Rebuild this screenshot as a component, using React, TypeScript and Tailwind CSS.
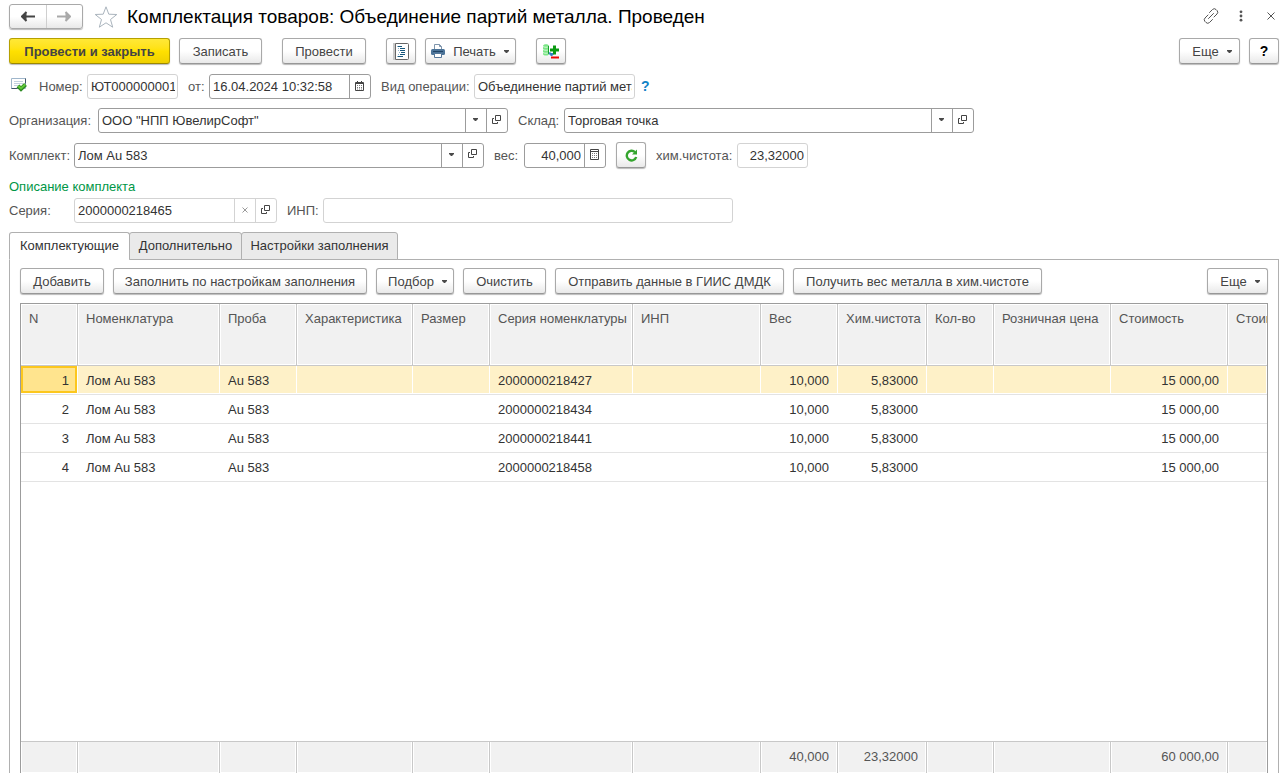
import React from "react";
import clsx from "clsx";

interface ButtonProps {
  className?: string;
  label?: string;
  caret?: boolean;
  primary?: boolean;
  children?: React.ReactNode;
}

const Caret = () => (
  <svg width="6" height="3" viewBox="0 0 6 3" className="shrink-0" fill="#4a4a4a">
    <path d="M0 0h5v1L3 3H2L0 1z" />
  </svg>
);

const Button: React.FC<ButtonProps> = ({ className, label, caret, primary, children }) => (
  <button
    type="button"
    aria-label={label}
    className={clsx(
      "flex h-[26px] shrink-0 items-center justify-center gap-2 rounded-[3px] border bg-linear-to-b whitespace-nowrap text-[#444] shadow-[0_1px_1px_#bbb]",
      primary
        ? "border-[#b5a000] border-b-[#9c8800] from-[#ffe836] via-[#ffe100] to-[#efd000] font-bold"
        : "border-[#a9a9a9] border-b-[#979797] from-white from-50% to-[#e9e9e9]",
      className
    )}
  >
    {children}
    {caret && <Caret />}
  </button>
);

interface FieldProps {
  id: string;
  label: string;
  value: string;
  labelWidth: string;
  width: string;
  muted?: boolean;
  right?: boolean;
  actions?: { label: string; icon: React.ReactNode }[];
}

const Field: React.FC<FieldProps> = ({ id, label, value, labelWidth, width, muted, right, actions = [] }) => {
  const border = muted ? "border-[#d3d3d3]" : "border-[#9c9c9c]";
  return (
    <div className="flex items-center">
      <label htmlFor={id} className={clsx("shrink-0 whitespace-nowrap text-[#555]", labelWidth)}>
        {label}
      </label>
      <div className={clsx("flex h-[25px] rounded-[3px] border bg-white", border, width)}>
        <input
          id={id}
          defaultValue={value}
          className={clsx("min-w-0 flex-1 bg-transparent pl-[3px] text-[#333] outline-none", right ? "pr-[3px] text-right" : "pr-[2px]")}
        />
        {actions.map((action) => (
          <button
            key={action.label}
            type="button"
            aria-label={action.label}
            className={clsx("flex w-[21px] shrink-0 items-center justify-center border-l pb-[2px]", border)}
          >
            {action.icon}
          </button>
        ))}
      </div>
    </div>
  );
};

const OpenIcon = () => (
  <svg width="10" height="10" viewBox="0 0 10 10" fill="none" stroke="#444">
    <path d="M3.500 .5h5v5h-5zM2 3.500H.5v5h5V7" />
  </svg>
);

const CalendarIcon = () => (
  <svg width="10" height="10" viewBox="0 0 10 10" fill="none" stroke="#444">
    <path d="M.5 1.500h8v8h-8zM0 2.500h9M2.500 0v2M6.500 0v2" />
    <path d="M2 4.500h1m1 0h1m1 0h1M2 6.500h1m1 0h1m1 0h1M2 8h1m1 0h1m1 0h1" strokeOpacity=".7" />
  </svg>
);

const CalculatorIcon = () => (
  <svg width="10" height="11" viewBox="0 0 10 11" fill="none" stroke="#444">
    <path d="M.5 .5h8v10h-8zM1 2.500h7" />
    <path d="M2 4.500h1m1 0h1m1 0h1M2 6.500h1m1 0h1m1 0h1M2 8.500h1m1 0h1m1 0h1" strokeOpacity=".7" />
  </svg>
);

const ClearIcon = () => (
  <svg width="6" height="6" viewBox="0 0 6 6" stroke="#999">
    <path d="M.5 .5l5 5M5.500 .5l-5 5" />
  </svg>
);

const Arrow = ({ color, flip }: { color: string; flip?: boolean }) => (
  <svg width="14" height="11" viewBox="0 0 14 11" fill="none" stroke={color} strokeWidth="2" className={clsx(flip && "rotate-180")}>
    <path d="M14 5.500H3" />
    <path d="M5.500 1L1 5.500 5.500 10" />
    <path d="M1.500 5.500l4-3.500v7z" fill={color} stroke="none" />
  </svg>
);

const PostedIcon = () => (
  <svg width="16" height="14" viewBox="0 0 16 14" fill="none">
    <path d="M.5 .5h14v10H.5z" fill="#fff" stroke="#9fb6cb" />
    <path d="M14.500 .5v5M.5 10.500h6" stroke="#3f5468" />
    <path d="M3 3.500h9M3 5.500h9M3 7.500h5" stroke="#c3d2e0" />
    <path d="M7 8l3 3 4.500-4.500" stroke="#2c8a22" strokeWidth="4" />
    <path d="M7.300 8l2.700 2.500 4.200-4" stroke="#62c93a" strokeWidth="2" />
  </svg>
);

const ReportIcon = () => (
  <svg width="16" height="17" viewBox="0 0 16 17" fill="none">
    <path d="M0 0h2v17H0z" fill="#c9c9c9" />
    <path d="M2.500 .5h12a1 1 0 0 1 1 1v14a1 1 0 0 1-1 1h-12z" fill="#fff" stroke="#666" />
    <path d="M5 3.500h4M7 5.500h5M7 7.500h5M8 9.500h4M7 11.500h5M5 13.500h5" stroke="#17577d" />
    <path d="M4 3.500h1M5 5.500h1M5 7.500h1M6 9.500h1M5 11.500h1M4 13.500h1" stroke="#8db4cb" />
  </svg>
);

const PrinterIcon = () => (
  <svg width="14" height="14" viewBox="0 0 14 14" fill="none">
    <path d="M3.500 5V.5h5l2 2V5" fill="#fff" stroke="#7e95ac" />
    <path d="M8.500 .5v2h2" stroke="#7e95ac" />
    <rect y="5" width="14" height="6" rx="1.500" fill="#4c7499" />
    <path d="M2 7.500h10" stroke="#1f4365" />
    <path d="M3.500 9.500h7v4h-7z" fill="#fff" stroke="#56789a" />
  </svg>
);

const StockIcon = () => (
  <svg width="16" height="15" viewBox="0 0 16 15" fill="none">
    <path d="M0 2c0-2.500 6-2.500 6 0v8c0 2-6 2-6 0z" fill="#7be586" />
    <path d="M0 2.500c1 1 5 1 6 0M0 5.500c1 1 5 1 6 0M0 8.500c1 1 5 1 6 0" stroke="#d2f8d4" />
    <path d="M5.500 2v8" stroke="#16a32a" />
    <path d="M7 8v1.500h4L8.500 12 6 9.500" fill="#2f7fc4" stroke="#2f7fc4" />
    <path d="M11.500 1.500v9M7 6h9" stroke="#0a9a12" strokeWidth="3" />
    <path d="M8 13.500h8" stroke="#f00505" strokeWidth="2" />
  </svg>
);

const RefreshIcon = () => (
  <svg width="13" height="13" viewBox="0 0 13 13" fill="none">
    <path d="M10 3.200A4.800 4.800 0 1 0 11.200 8" stroke="#34a52e" strokeWidth="2.400" />
    <path d="M12 .5v5H7z" fill="#34a52e" />
  </svg>
);

const pick = [
  { label: "Выбрать", icon: <Caret /> },
  { label: "Открыть", icon: <OpenIcon /> },
];

const columns = [
  { title: "N", width: "w-[57px]", right: true, total: "" },
  { title: "Номенклатура", width: "w-[142px]", total: "" },
  { title: "Проба", width: "w-[77px]", total: "" },
  { title: "Характеристика", width: "w-[116px]", total: "" },
  { title: "Размер", width: "w-[77px]", total: "" },
  { title: "Серия номенклатуры", width: "w-[143px]", total: "" },
  { title: "ИНП", width: "w-[128px]", total: "" },
  { title: "Вес", width: "w-[77px]", right: true, total: "40,000" },
  { title: "Хим.чистота", width: "w-[89px]", right: true, total: "23,32000" },
  { title: "Кол-во", width: "w-[67px]", right: true, total: "" },
  { title: "Розничная цена", width: "w-[117px]", right: true, total: "" },
  { title: "Стоимость", width: "w-[117px]", right: true, total: "60 000,00" },
  { title: "Стоимость", width: "w-auto", right: true, total: "" },
];

const rows = ["2000000218427", "2000000218434", "2000000218441", "2000000218458"].map((series, i) => [
  String(i + 1),
  "Лом Au 583",
  "Au 583",
  "",
  "",
  series,
  "",
  "10,000",
  "5,83000",
  "",
  "",
  "15 000,00",
  "",
]);

const tabs = [
  { title: "Комплектующие", width: "w-[121px]" },
  { title: "Дополнительно", width: "w-[113px]" },
  { title: "Настройки заполнения", width: "w-[157px]" },
];

const TitleBar = () => (
  <header className="flex h-[33px] items-center pr-1">
    <div className="flex h-[25px] w-[74px] rounded-[3px] border border-[#a9a9a9] bg-linear-to-b from-white from-50% to-[#e9e9e9] shadow-[0_1px_1px_#bbb]">
      <button type="button" aria-label="Назад" className="flex flex-1 items-center justify-center border-r border-[#cfcfcf]">
        <Arrow color="#444" />
      </button>
      <button type="button" aria-label="Вперед" className="flex flex-1 items-center justify-center">
        <Arrow color="#a9a9a9" flip />
      </button>
    </div>
    <button type="button" aria-label="Избранное" className="ml-[11px]">
      <svg width="24" height="22" viewBox="0 0 24 22" fill="#fff" stroke="#aab4bd">
        <path d="M12 .8l2.800 7.400 8 .3-6.300 5 2.200 7.700L12 16.800l-6.700 4.400 2.200-7.700-6.300-5 8-.3z" />
      </svg>
    </button>
    <h1 className="ml-[9px] flex-1 text-[19px] whitespace-nowrap text-black">
      Комплектация товаров: Объединение партий металла. Проведен
    </h1>
    <div className="flex items-center gap-5 pb-[2px]">
      <button type="button" aria-label="Получить ссылку">
        <svg width="16" height="16" viewBox="0 0 16 16" fill="none" stroke="#555" strokeLinecap="round">
          <path d="M6.500 4.500l3-3a2.500 2.500 0 0 1 3.500 0l1 1a2.500 2.500 0 0 1 0 3.500l-3 3M9.500 11.500l-3 3a2.500 2.500 0 0 1-3.500 0l-1-1A2.500 2.500 0 0 1 2 10l3-3M5.500 10.500l5-5" />
        </svg>
      </button>
      <button type="button" aria-label="Меню">
        <svg width="4" height="12" viewBox="0 0 4 12" fill="#555">
          <circle cx="2" cy="1.800" r="1.400" />
          <circle cx="2" cy="6" r="1.400" />
          <circle cx="2" cy="10.200" r="1.400" />
        </svg>
      </button>
      <button type="button" aria-label="Закрыть" className="ml-1">
        <svg width="8" height="8" viewBox="0 0 8 8" stroke="#555">
          <path d="M.5 .5l7 7M7.500 .5l-7 7" />
        </svg>
      </button>
    </div>
  </header>
);

const ItemsTable = () => (
  <div className="mt-[9px] min-h-0 flex-1 overflow-hidden border border-b-0 border-[#9c9c9c]">
    <table className="h-full w-full table-fixed border-separate border-spacing-0 text-[#333]">
      <thead>
        <tr className="h-[62px]">
          {columns.map((col, i) => (
            <th
              key={i}
              className={clsx(
                "overflow-hidden border-b border-[#c8c8c8] bg-[#f1f1f1] px-2 pt-[7px] text-left align-top font-normal whitespace-nowrap text-[#555] shadow-[inset_0_0_0_1px_#fff]",
                i < columns.length - 1 && "border-r",
                col.width
              )}
            >
              {col.title}
            </th>
          ))}
        </tr>
      </thead>
      <tbody>
        {rows.map((row, r) => (
          <tr key={r} className="h-[29px]">
            {row.map((cell, c) => (
              <td
                key={c}
                className={clsx(
                  "border-b border-[#e3e3e3] pr-[9px] pl-2 whitespace-nowrap",
                  columns[c].right && "text-right",
                  r === 0 && c > 0 && "bg-[#fef1c8] shadow-[inset_-1px_-1px_0_#fff]",
                  r === 0 && c === 0 && "bg-[#ffe48e] shadow-[inset_-1px_-1px_0_#fff,inset_0_0_0_2px_#fcc71e,inset_-3px_-3px_0_#fcc71e]"
                )}
              >
                {cell}
              </td>
            ))}
          </tr>
        ))}
        <tr>
          <td colSpan={columns.length} />
        </tr>
      </tbody>
      <tfoot>
        <tr className="h-[32px]">
          {columns.map((col, i) => (
            <td
              key={i}
              className={clsx(
                "border-t border-[#c8c8c8] bg-[#f1f1f1] px-2 pb-[2px] text-right whitespace-nowrap text-[#555] shadow-[inset_1px_-1px_0_#fff,inset_-1px_0_0_#fff]",
                i < columns.length - 1 && "border-r"
              )}
            >
              {col.total}
            </td>
          ))}
        </tr>
      </tfoot>
    </table>
  </div>
);

export default function App() {
  return (
    <div className="flex h-screen min-h-[560px] flex-col overflow-hidden bg-white pr-[3px] pb-[10px] pl-[9px] font-['Liberation_Sans',Arial,sans-serif] text-[13px] leading-[15px]">
      <TitleBar />

      <div className="mt-[5px] flex">
        <Button className="w-[161px]" primary>
          Провести и закрыть
        </Button>
        <Button className="ml-[9px] w-[83px]">Записать</Button>
        <Button className="ml-5 w-[84px]">Провести</Button>
        <Button className="ml-5 w-[30px]" label="Отчет о движениях">
          <ReportIcon />
        </Button>
        <Button className="ml-[9px] w-[91px]" caret>
          <PrinterIcon />
          Печать
        </Button>
        <Button className="ml-5 w-[30px]" label="Движения">
          <StockIcon />
        </Button>
        <div className="flex-1" />
        <Button className="w-[61px] pl-[6px]" caret>
          Еще
        </Button>
        <Button className="ml-[9px] w-[30px] text-[14px] font-bold text-black">?</Button>
      </div>

      <div className="mt-[10px] flex items-center gap-[10px]">
        <div className="w-5 pb-[3px] pl-[2px]">
          <PostedIcon />
        </div>
        <Field id="number" label="Номер:" value="ЮТ000000001" labelWidth="w-12" width="w-[91px]" muted />
        <Field
          id="date"
          label="от:"
          value="16.04.2024 10:32:58"
          labelWidth="w-[21px]"
          width="w-[162px]"
          actions={[{ label: "Календарь", icon: <CalendarIcon /> }]}
        />
        <Field id="operation" label="Вид операции:" value="Объединение партий металла" labelWidth="w-[93px]" width="w-[161px]" muted />
        <button type="button" className="-ml-1 text-[14px] font-bold text-[#1383c6]">
          ?
        </button>
      </div>

      <div className="mt-[9px] flex items-center gap-[10px]">
        <Field id="organization" label="Организация:" value={'ООО "НПП ЮвелирСофт"'} labelWidth="w-[89px]" width="w-[410px]" actions={pick} />
        <Field id="warehouse" label="Склад:" value="Торговая точка" labelWidth="w-[46px]" width="w-[410px]" actions={pick} />
      </div>

      <div className="mt-[9px] flex items-center gap-[10px]">
        <Field id="kit" label="Комплект:" value="Лом Au 583" labelWidth="w-[65px]" width="w-[410px]" actions={pick} />
        <Field
          id="weight"
          label="вес:"
          value="40,000"
          labelWidth="w-[30px]"
          width="w-[82px]"
          right
          actions={[{ label: "Калькулятор", icon: <CalculatorIcon /> }]}
        />
        <Button className="w-[30px]" label="Обновить">
          <RefreshIcon />
        </Button>
        <Field id="purity" label="хим.чистота:" value="23,32000" labelWidth="w-[81px]" width="w-[71px]" muted right />
      </div>

      <h2 className="mt-[11px] text-[#009646]">Описание комплекта</h2>

      <div className="mt-1 flex items-center gap-[10px]">
        <Field
          id="series"
          label="Серия:"
          value="2000000218465"
          labelWidth="w-[65px]"
          width="w-[203px]"
          muted
          actions={[
            { label: "Очистить", icon: <ClearIcon /> },
            { label: "Открыть", icon: <OpenIcon /> },
          ]}
        />
        <Field id="inp" label="ИНП:" value="" labelWidth="w-9" width="w-[410px]" muted />
      </div>

      <div role="tablist" className="relative z-10 mt-[9px] flex">
        {tabs.map((tab, i) => (
          <button
            key={tab.title}
            type="button"
            role="tab"
            aria-selected={i === 0}
            className={clsx(
              "h-7 rounded-t-[3px] border border-[#b0b0b0] pb-[2px] whitespace-nowrap text-[#333]",
              i === 0 ? "border-b-white bg-white" : "-ml-px bg-[#eaeaea]",
              tab.width
            )}
          >
            {tab.title}
          </button>
        ))}
      </div>

      <main className="-mt-px flex min-h-0 flex-1 flex-col border border-b-0 border-[#b0b0b0] px-[10px] pt-2">
        <div className="flex gap-[9px]">
          <Button className="w-[84px]">Добавить</Button>
          <Button className="w-[254px]">Заполнить по настройкам заполнения</Button>
          <Button className="w-[78px] pl-[6px]" caret>
            Подбор
          </Button>
          <Button className="w-[83px]">Очистить</Button>
          <Button className="w-[229px]">Отправить данные в ГИИС ДМДК</Button>
          <Button className="w-[249px]">Получить вес металла в хим.чистоте</Button>
          <Button className="ml-auto w-[61px] pl-[6px]" caret>
            Еще
          </Button>
        </div>
        <ItemsTable />
      </main>
    </div>
  );
}
